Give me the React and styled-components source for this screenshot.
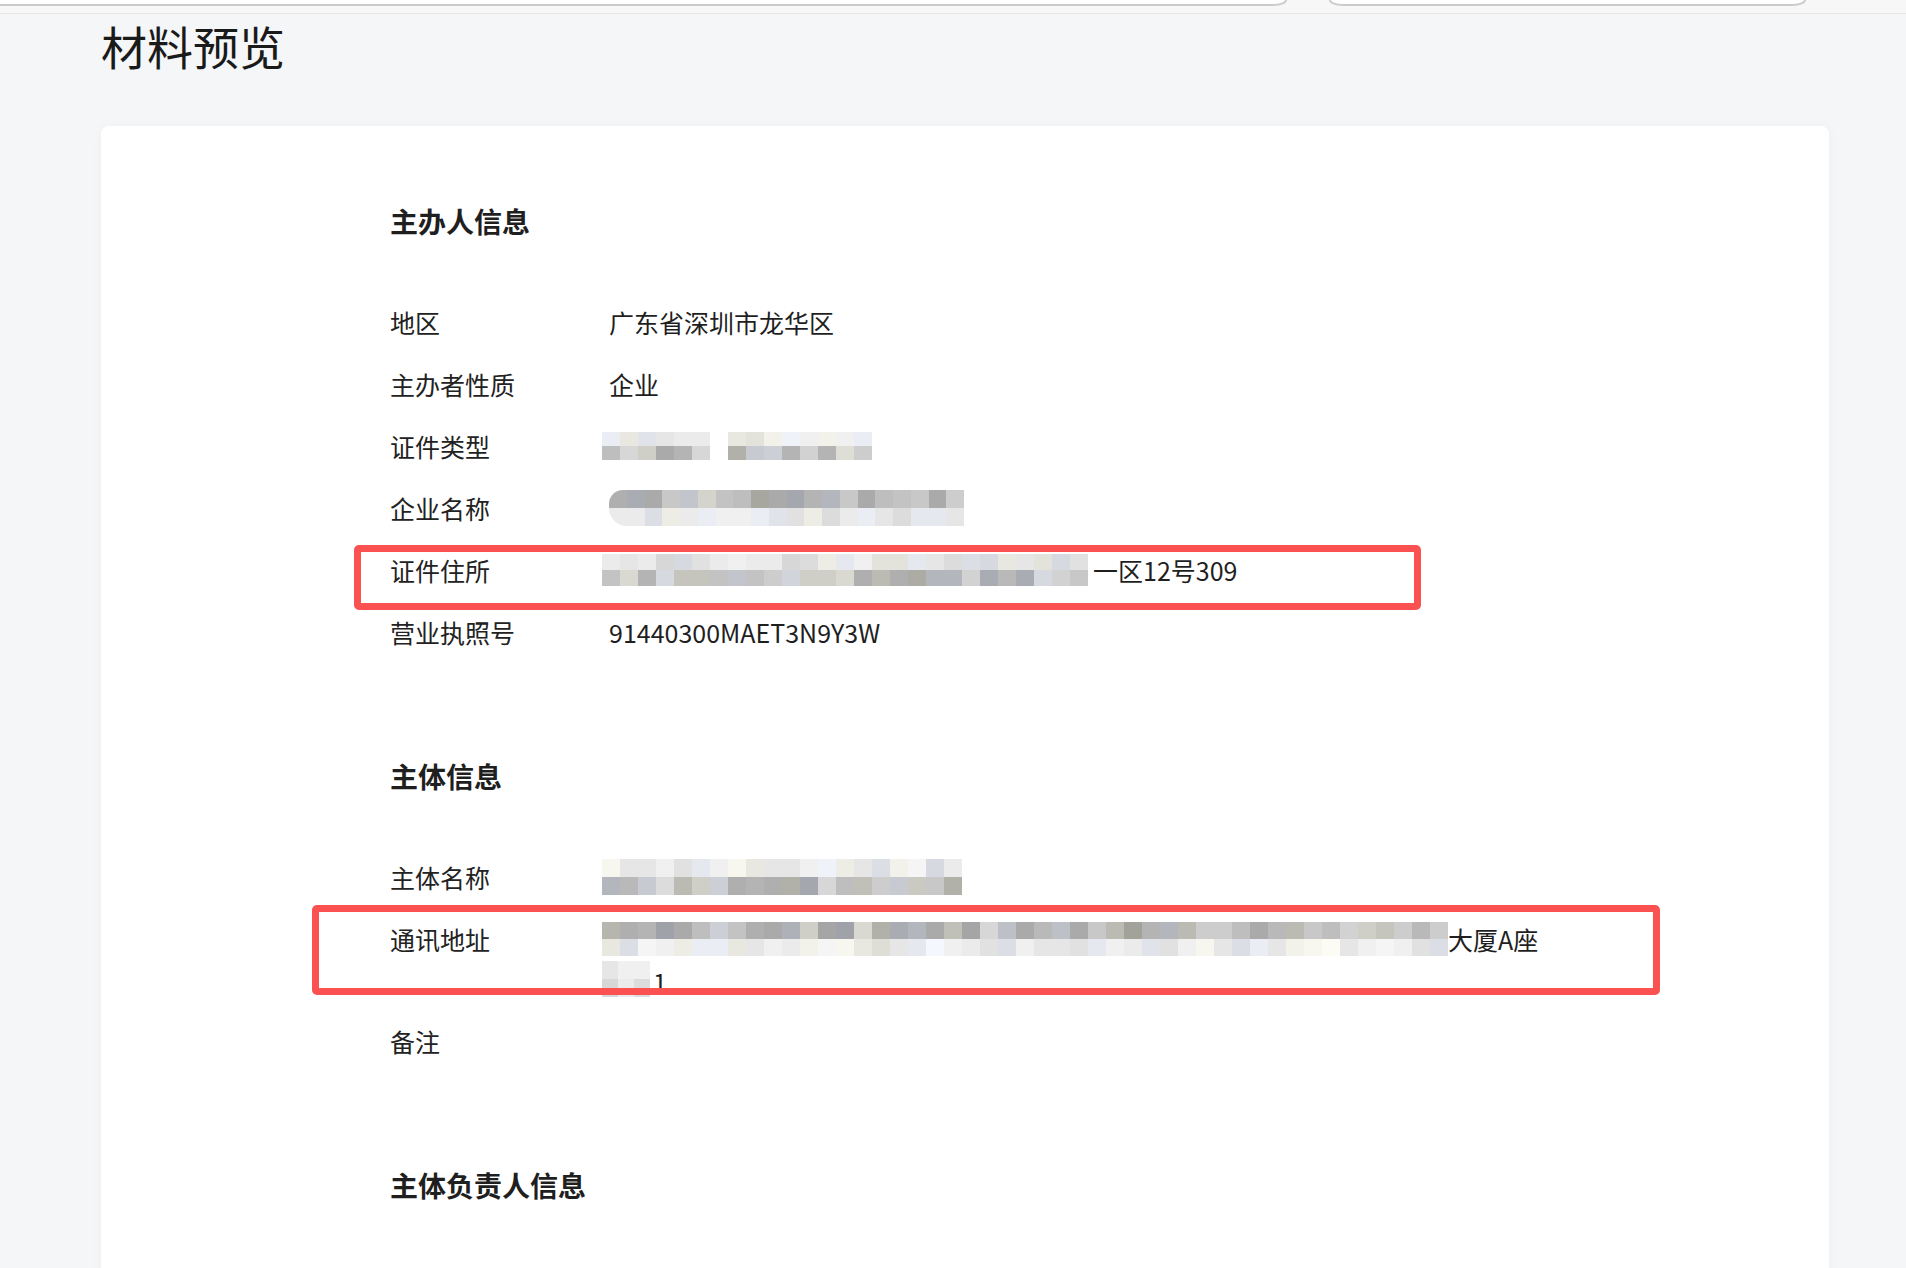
import styled, { createGlobalStyle } from "styled-components";

const GlobalStyle = createGlobalStyle`
  html, body {
    margin: 0;
    padding: 0;
    background: #f5f6f8;
  }
  body {
    font-family: "Noto Sans CJK SC", "Noto Sans", sans-serif;
    color: #1f1f1f;
  }
`;

// deterministic "random" grays for the redaction mosaics
const rand = (seed, i) => {
  const x = Math.sin(seed * 97.13 + i * 12.9898) * 43758.5453;
  return x - Math.floor(x);
};

const tone = (seed, i, min, max) => {
  const v = Math.round((min + rand(seed, i) * (max - min)) / 5) * 5;
  const hue = Math.floor(rand(seed + 11, i) * 5);
  if (hue === 0) return `rgb(${v - 6}, ${v - 3}, ${v + 3})`;
  if (hue === 1) return `rgb(${v + 2}, ${v + 2}, ${v - 6})`;
  return `rgb(${v}, ${v}, ${v})`;
};

const Mosaic = ({ seed, cols, cell = 18, rowH = 17, ranges, round }) => {
  const cells = ranges.flatMap(([min, max], r) =>
    Array.from({ length: cols }, (_, i) => tone(seed + r * 31, i, min, max))
  );
  return (
    <MosaicGrid $cols={cols} $cell={cell} $rowH={rowH} $round={round}>
      {cells.map((c, i) => (
        <Cell key={i} $c={c} />
      ))}
    </MosaicGrid>
  );
};

const App = () => {
  return (
    <>
      <GlobalStyle />
      <Strip>
        <Tab $w={1307} $first />
        <Tab $w={477} />
      </Strip>

      <Page>
        <Title>材料预览</Title>

        <Card>
          <Section>
            <Heading>主办人信息</Heading>
            <Rows>
              <Row>
                <Label>地区</Label>
                <Value>广东省深圳市龙华区</Value>
              </Row>
              <Row>
                <Label>主办者性质</Label>
                <Value>企业</Value>
              </Row>
              <Row>
                <Label>证件类型</Label>
                <Value $shift $gap={18}>
                  <Mosaic seed={3} cols={6} rowH={14} ranges={[[225, 245], [165, 215]]} />
                  <Mosaic seed={8} cols={8} rowH={14} ranges={[[225, 245], [170, 220]]} />
                </Value>
              </Row>
              <Row>
                <Label>企业名称</Label>
                <Value>
                  <Mosaic
                    seed={14}
                    cols={20}
                    cell={17.75}
                    rowH={18}
                    round="14px 0 0 18px"
                    ranges={[[165, 215], [220, 242]]}
                  />
                </Value>
              </Row>
              <Row>
                <Label>证件住所</Label>
                <Value $shift $gap={5}>
                  <Mosaic seed={21} cols={27} rowH={16} ranges={[[215, 242], [170, 220]]} />
                  一区12号309
                </Value>
                <Highlight $l={-36} $t={-5} $w={1067} $h={65} />
              </Row>
              <Row>
                <Label>营业执照号</Label>
                <Value>91440300MAET3N9Y3W</Value>
              </Row>
            </Rows>
          </Section>

          <Section>
            <Heading>主体信息</Heading>
            <Rows>
              <Row>
                <Label>主体名称</Label>
                <Value $shift>
                  <Mosaic seed={35} cols={20} rowH={18} ranges={[[220, 245], [170, 220]]} />
                </Value>
              </Row>
              <Row>
                <Label>通讯地址</Label>
                <Value $shift $column>
                  <Line>
                    <Mosaic seed={42} cols={47} rowH={17} ranges={[[160, 215], [222, 248]]} />
                    大厦A座
                  </Line>
                  <Line>
                    <Mosaic seed={57} cols={3} cell={16} rowH={18} ranges={[[220, 240], [210, 240]]} />
                    <Tail>1</Tail>
                  </Line>
                </Value>
                <Highlight $l={-78} $t={-14} $w={1348} $h={90} />
              </Row>
              <Row>
                <Label>备注</Label>
                <Value />
              </Row>
            </Rows>
          </Section>

          <Section>
            <Heading>主体负责人信息</Heading>
          </Section>
        </Card>
      </Page>
    </>
  );
};

export default App;

const Strip = styled.div`
  height: 13px;
  display: flex;
  gap: 42px;
  background: #f7f7f7;
  border-bottom: 1px solid #e6e6e6;
  overflow: hidden;
`;

const Tab = styled.div`
  box-sizing: border-box;
  flex: none;
  width: ${(p) => p.$w}px;
  height: 6px;
  margin-left: ${(p) => (p.$first ? "-20px" : "0")};
  background: #ffffff;
  border: 2px solid #cbcbcb;
  border-top: none;
  border-radius: 0 0 14px 14px / 0 0 6px 6px;
`;

const Page = styled.main`
  padding: 0 77px 0 101px;
`;

const Title = styled.h1`
  margin: -1px 0 0;
  font-size: 46px;
  line-height: 64px;
  font-weight: 400;
  color: #1a1a1a;
`;

const Card = styled.section`
  margin-top: 49px;
  padding: 75px 0 220px 289px;
  background: #ffffff;
  border-radius: 8px;
  box-shadow: 0 0 12px rgba(0, 0, 0, 0.03);
`;

const Section = styled.div`
  & + & {
    margin-top: 104px;
  }
`;

const Heading = styled.h2`
  margin: 0 0 61px;
  font-size: 28px;
  line-height: 40px;
  font-weight: 700;
  color: #1f1f1f;
`;

const Rows = styled.div`
  display: flex;
  flex-direction: column;
  gap: 22px;
`;

const Row = styled.div`
  position: relative;
  display: grid;
  grid-template-columns: 219px 1fr;
  font-size: 25px;
  line-height: 40px;
`;

const Label = styled.div`
  color: #222222;
`;

const Value = styled.div`
  display: flex;
  flex-direction: ${(p) => (p.$column ? "column" : "row")};
  align-items: ${(p) => (p.$column ? "flex-start" : "center")};
  gap: ${(p) => p.$gap || 0}px;
  min-height: 40px;
  margin-left: ${(p) => (p.$shift ? "-7px" : "0")};
  color: #1f1f1f;
`;

const Line = styled.div`
  display: flex;
  align-items: center;
  height: 40px;
`;

const Tail = styled.span`
  margin-left: 3px;
  position: relative;
  top: 2px;
`;

const MosaicGrid = styled.span`
  display: inline-grid;
  flex: none;
  grid-template-columns: repeat(${(p) => p.$cols}, ${(p) => p.$cell}px);
  grid-auto-rows: ${(p) => p.$rowH}px;
  border-radius: ${(p) => p.$round || "0"};
  overflow: hidden;
`;

const Cell = styled.span`
  background: ${(p) => p.$c};
`;

const Highlight = styled.div`
  position: absolute;
  left: ${(p) => p.$l}px;
  top: ${(p) => p.$t}px;
  width: ${(p) => p.$w}px;
  height: ${(p) => p.$h}px;
  box-sizing: border-box;
  border: 7px solid #fb5151;
  border-radius: 5px;
  pointer-events: none;
`;
